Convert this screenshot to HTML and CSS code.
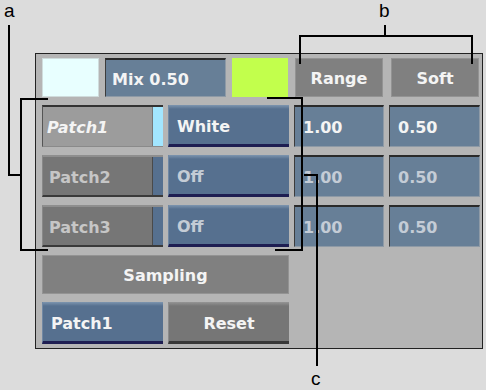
FILE: index.html
```html
<!DOCTYPE html>
<html lang="en">
<head>
  <meta charset="UTF-8" />
  <title>Patch Sampling</title>
  <link rel="stylesheet" href="styles.css">
</head>
<body>
  <div class="panel">
    <div class="top-row">
      <div class="swatch swatch-white"></div>
      <div class="field field-mix">Mix 0.50</div>
      <div class="swatch swatch-green"></div>
      <div class="tag tag-range">Range</div>
      <div class="tag tag-soft">Soft</div>
    </div>

    <div class="grid">
      <div class="patch patch-active"><span class="patch-name">Patch1</span><span class="patch-chip"></span></div>
      <div class="btn btn-blue">White</div>
      <div class="field">1.00</div>
      <div class="field">0.50</div>

      <div class="patch"><span class="patch-name">Patch2</span><span class="patch-chip"></span></div>
      <div class="btn btn-blue dim">Off</div>
      <div class="field dim">1.00</div>
      <div class="field dim">0.50</div>

      <div class="patch"><span class="patch-name">Patch3</span><span class="patch-chip"></span></div>
      <div class="btn btn-blue dim">Off</div>
      <div class="field dim">1.00</div>
      <div class="field dim">0.50</div>

      <div class="tag sampling">Sampling</div>
      <div class="btn btn-blue btn-current">Patch1</div>
      <div class="btn btn-gray btn-reset">Reset</div>
    </div>
  </div>

  <svg class="callouts" width="486" height="390" viewBox="0 0 486 390">
    <g fill="none" stroke="#000" stroke-width="2">
      <path d="M9 25 V175 H21" />
      <path d="M48 99 H21 V250 H48" />
      <path d="M385 25 V36" />
      <path d="M300 64 V36 H472 V64" />
      <path d="M267 98 H302 V250 H275" />
      <path d="M304 175 H317 V366" />
    </g>
    <text x="4" y="17" class="callout-label">a</text>
    <text x="379" y="17" class="callout-label">b</text>
    <text x="311" y="385" class="callout-label">c</text>
  </svg>
</body>
</html>
```

FILE: styles.css
```css
body {
  margin: 0;
  width: 486px;
  height: 390px;
  position: relative;
  overflow: hidden;
  background: #dcdcdc;
  font-family: "DejaVu Sans", sans-serif;
  font-weight: bold;
  font-size: 16px;
  color: #f4f4f4;
}

.panel {
  box-sizing: border-box;
  width: 448px;
  height: 296px;
  margin: 53px 0 0 35px;
  padding: 4px 2px 4px 6px;
  border: 1px solid #222;
  background: #b5b5b5;
}

.top-row {
  display: flex;
  height: 39px;
  margin-bottom: 8px;
}

.swatch {
  box-sizing: border-box;
  height: 39px;
}

.swatch-white {
  width: 57px;
  margin-right: 6px;
  background: #e8ffff;
  border: 1px solid #cfdcdc;
}

.swatch-green {
  width: 56px;
  margin-right: 7px;
  background: #c2ff4c;
}

.field {
  box-sizing: border-box;
  display: flex;
  align-items: center;
  padding: 2px 0 0 8px;
  background: #677f97;
  border-top: 2px solid #2a2a2a;
  border-left: 1px solid #3c3c3c;
  border-right: 1px solid #8e9aa6;
  border-bottom: 1px solid #8e9aa6;
}

.field-mix {
  width: 121px;
  margin-right: 6px;
  padding-left: 6px;
}

.tag {
  box-sizing: border-box;
  display: flex;
  align-items: center;
  justify-content: center;
  padding-top: 2px;
  background: #808080;
  border: 1px solid #939393;
}

.tag-range {
  width: 88px;
  margin-right: 8px;
}

.tag-soft {
  width: 88px;
}

.grid {
  display: grid;
  grid-template-columns: 121px 121px 90px 91px;
  grid-template-rows: 42px 42px 42px 39px 42px;
  column-gap: 5px;
  row-gap: 8px;
}

.sampling {
  grid-column: 1 / 3;
  grid-row: 4;
}

.btn-current {
  grid-column: 1;
  grid-row: 5;
}

.btn-reset {
  grid-column: 2;
  grid-row: 5;
}

.patch {
  box-sizing: border-box;
  display: flex;
  background: #767676;
  border-top: 2px solid #8e8e8e;
  border-bottom: 2px solid #3a3a3a;
  border-left: 1px solid #888;
  color: #c6c6c6;
}

.patch-name {
  flex: 1;
  display: flex;
  align-items: center;
  padding: 2px 0 0 6px;
}

.patch-chip {
  width: 10px;
  background: #56708f;
  border-left: 1px solid #4a4a4a;
}

.patch-active {
  background: #9c9c9c;
  border-top: 2px solid #333;
  border-bottom: 1px solid #8a8a8a;
  border-left: 1px solid #555;
  color: #f4f4f4;
}

.patch-active .patch-name {
  font-style: italic;
  padding-left: 4px;
}

.patch-active .patch-chip {
  background: #a2e6ff;
  border-left: 1px solid #777;
}

.btn {
  box-sizing: border-box;
  display: flex;
  align-items: center;
  padding: 4px 0 0 8px;
  border-left: 1px solid #7088a4;
}

.btn-blue {
  background: linear-gradient(#7d95af, #56708f 4px);
  border-bottom: 3px solid #1e1e52;
}

.btn-gray {
  justify-content: center;
  padding-left: 0;
  background: linear-gradient(#959595, #767676 4px);
  border-left: 1px solid #8c8c8c;
  border-bottom: 3px solid #383838;
}

.dim {
  color: #c4ccd6;
}

.callouts {
  position: absolute;
  left: 0;
  top: 0;
  pointer-events: none;
}

.callout-label {
  font-family: "Liberation Sans", Arial, sans-serif;
  font-weight: normal;
  font-size: 19px;
  fill: #000;
}
```
